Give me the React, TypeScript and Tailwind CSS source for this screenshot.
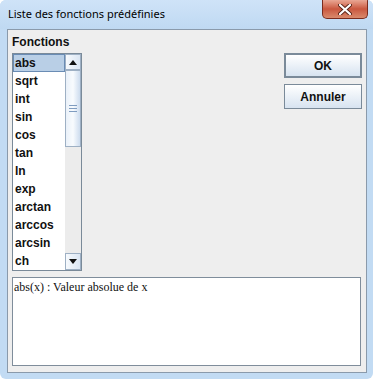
const functions = ["abs", "sqrt", "int", "sin", "cos", "tan", "ln", "exp", "arctan", "arccos", "arcsin", "ch"];

function Arrow({ up }: { up?: boolean }) {
  return (
    <svg width="8" height="5" viewBox="0 0 8 5" className="block">
      {up ? <path d="M0 5 L4 0 L8 5 Z" fill="#111" /> : <path d="M0 0 L8 0 L4 5 Z" fill="#111" />}
    </svg>
  );
}

function ScrollBar() {
  return (
    <div className="flex w-[16px] flex-col bg-[#ececec]">
      <div className="flex h-[16px] items-center justify-center border border-[#9eb0c4] bg-gradient-to-r from-[#f7fafd] to-[#dbe6f3]">
        <Arrow up />
      </div>
      <div className="flex h-[77px] flex-col items-center justify-center gap-[2px] border border-[#9eb0c4] bg-gradient-to-r from-[#eaf1f9] via-[#f8fbfe] to-[#cddcee]">
        <div className="h-px w-[8px] bg-[#7f9cc0]" />
        <div className="h-px w-[8px] bg-[#7f9cc0]" />
        <div className="h-px w-[8px] bg-[#7f9cc0]" />
      </div>
      <div className="flex-1" />
      <div className="flex h-[17px] items-center justify-center border border-[#9eb0c4] bg-gradient-to-r from-[#f7fafd] to-[#dbe6f3]">
        <Arrow />
      </div>
    </div>
  );
}

function DialogButton({ label, focused }: { label: string; focused?: boolean }) {
  return (
    <div
      className={
        focused
          ? "flex h-[25px] w-[78px] items-center justify-center border-2 border-[#7a8a99] bg-gradient-to-b from-[#ffffff] to-[#d7e3f0] text-[12px] font-bold text-[#111]"
          : "flex h-[25px] w-[78px] items-center justify-center border border-[#7a8a99] bg-gradient-to-b from-[#ffffff] to-[#d7e3f0] text-[12px] font-bold text-[#111]"
      }
    >
      {label}
    </div>
  );
}

export default function App() {
  return (
    <div className="h-[379px] w-[373px] overflow-hidden rounded-[6px] bg-[#c2dbf3] font-['Liberation_Sans',Arial,sans-serif]">
      {/* title bar */}
      <div className="flex h-[29px] items-start justify-between bg-gradient-to-b from-[#cfe3f8] to-[#bfd9f2] pl-[8px] pr-[5px]">
        <div className="mt-[6px] font-['Noto_Sans',sans-serif] text-[11px] leading-[16px] text-[#000]">
          Liste des fonctions prédéfinies
        </div>
        <div className="flex h-[19px] w-[46px] items-center justify-center rounded-b-[5px] border border-t-0 border-[#7a2c1e] bg-gradient-to-b from-[#e9a794] via-[#c9573f] to-[#d98a6c]">
          <svg width="14" height="11" viewBox="0 0 14 11">
            <path d="M2 1 L12 10 M12 1 L2 10" stroke="#5a2418" strokeWidth="4" strokeLinecap="round" />
            <path d="M2 1 L12 10 M12 1 L2 10" stroke="#ffffff" strokeWidth="2.2" strokeLinecap="round" />
          </svg>
        </div>
      </div>

      {/* client area */}
      <div className="ml-[7px] h-[344px] w-[360px] border border-[#8a9aab] bg-[#eeeeee] px-[4px] pt-[5px]">
        <div className="text-[12px] font-bold leading-[14px] text-[#111]">Fonctions</div>
        <div className="mt-[4px] flex items-start justify-between">
          <div className="flex h-[218px] w-[70px] border border-[#7a8a99] bg-white">
            <div className="flex w-[52px] flex-col">
              {functions.map((f, i) => (
                <div
                  key={f}
                  className={
                    i === 0
                      ? "h-[18px] border border-[#6a8cb4] bg-[#b9cfe6] pl-[1px] text-[12px] font-bold leading-[16px] text-[#111]"
                      : "h-[18px] pl-[2px] text-[12px] font-bold leading-[18px] text-[#111]"
                  }
                >
                  {f}
                </div>
              ))}
            </div>
            <ScrollBar />
          </div>
          <div className="flex flex-col gap-[6px]">
            <DialogButton label="OK" focused />
            <DialogButton label="Annuler" />
          </div>
        </div>
        <div className="mr-[1px] mt-[6px] h-[89px] border border-[#7f8d9b] bg-white px-[1px] pt-[1px] font-['Liberation_Serif','Times_New_Roman',serif] text-[12px] leading-[16px] text-[#111]">
          abs(x) : Valeur absolue de x
        </div>
      </div>
    </div>
  );
}
